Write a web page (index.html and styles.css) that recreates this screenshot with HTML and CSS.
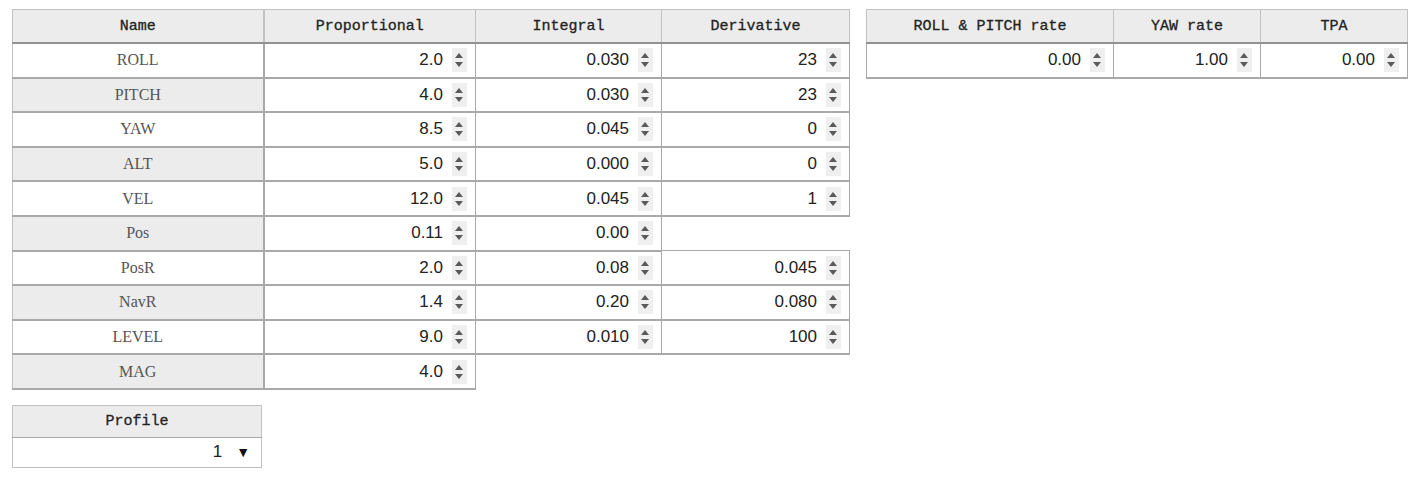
FILE: index.html
```html
<!DOCTYPE html>
<html lang="en">
  <head>
    <meta charset="UTF-8" />
    <meta name="viewport" content="width=device-width, initial-scale=1.0" />
    <title>PID Tuning</title>
    <link rel="stylesheet" href="styles.css">
  </head>
  <body>
    <div class="tab-pid">
      <div class="pid-column">
        <table class="pid-table">
          <colgroup>
            <col style="width: 251px">
            <col style="width: 212px">
            <col style="width: 186px">
            <col style="width: 188px">
          </colgroup>
          <thead>
            <tr>
              <th>Name</th>
              <th>Proportional</th>
              <th>Integral</th>
              <th>Derivative</th>
            </tr>
          </thead>
          <tbody>
            <tr>
              <td class="name">ROLL</td>
              <td><div class="num-field"><input type="text" value="2.0"><span class="spin"></span></div></td>
              <td><div class="num-field"><input type="text" value="0.030"><span class="spin"></span></div></td>
              <td><div class="num-field"><input type="text" value="23"><span class="spin"></span></div></td>
            </tr>
            <tr>
              <td class="name">PITCH</td>
              <td><div class="num-field"><input type="text" value="4.0"><span class="spin"></span></div></td>
              <td><div class="num-field"><input type="text" value="0.030"><span class="spin"></span></div></td>
              <td><div class="num-field"><input type="text" value="23"><span class="spin"></span></div></td>
            </tr>
            <tr>
              <td class="name">YAW</td>
              <td><div class="num-field"><input type="text" value="8.5"><span class="spin"></span></div></td>
              <td><div class="num-field"><input type="text" value="0.045"><span class="spin"></span></div></td>
              <td><div class="num-field"><input type="text" value="0"><span class="spin"></span></div></td>
            </tr>
            <tr>
              <td class="name">ALT</td>
              <td><div class="num-field"><input type="text" value="5.0"><span class="spin"></span></div></td>
              <td><div class="num-field"><input type="text" value="0.000"><span class="spin"></span></div></td>
              <td><div class="num-field"><input type="text" value="0"><span class="spin"></span></div></td>
            </tr>
            <tr>
              <td class="name">VEL</td>
              <td><div class="num-field"><input type="text" value="12.0"><span class="spin"></span></div></td>
              <td><div class="num-field"><input type="text" value="0.045"><span class="spin"></span></div></td>
              <td><div class="num-field"><input type="text" value="1"><span class="spin"></span></div></td>
            </tr>
            <tr>
              <td class="name">Pos</td>
              <td><div class="num-field"><input type="text" value="0.11"><span class="spin"></span></div></td>
              <td><div class="num-field"><input type="text" value="0.00"><span class="spin"></span></div></td>
            </tr>
            <tr>
              <td class="name">PosR</td>
              <td><div class="num-field"><input type="text" value="2.0"><span class="spin"></span></div></td>
              <td><div class="num-field"><input type="text" value="0.08"><span class="spin"></span></div></td>
              <td><div class="num-field"><input type="text" value="0.045"><span class="spin"></span></div></td>
            </tr>
            <tr>
              <td class="name">NavR</td>
              <td><div class="num-field"><input type="text" value="1.4"><span class="spin"></span></div></td>
              <td><div class="num-field"><input type="text" value="0.20"><span class="spin"></span></div></td>
              <td><div class="num-field"><input type="text" value="0.080"><span class="spin"></span></div></td>
            </tr>
            <tr>
              <td class="name">LEVEL</td>
              <td><div class="num-field"><input type="text" value="9.0"><span class="spin"></span></div></td>
              <td><div class="num-field"><input type="text" value="0.010"><span class="spin"></span></div></td>
              <td><div class="num-field"><input type="text" value="100"><span class="spin"></span></div></td>
            </tr>
            <tr>
              <td class="name">MAG</td>
              <td><div class="num-field"><input type="text" value="4.0"><span class="spin"></span></div></td>
            </tr>
          </tbody>
        </table>

        <table class="profile-table">
          <thead>
            <tr><th>Profile</th></tr>
          </thead>
          <tbody>
            <tr>
              <td>
                <div class="profile-select">
                  <span>1</span>
                  <span class="arrow">&#9660;</span>
                </div>
              </td>
            </tr>
          </tbody>
        </table>
      </div>

      <table class="rate-table">
        <colgroup>
          <col style="width: 247px">
          <col style="width: 147px">
          <col style="width: 147px">
        </colgroup>
        <thead>
          <tr>
            <th>ROLL &amp; PITCH rate</th>
            <th>YAW rate</th>
            <th>TPA</th>
          </tr>
        </thead>
        <tbody>
          <tr>
            <td><div class="num-field"><input type="text" value="0.00"><span class="spin"></span></div></td>
            <td><div class="num-field"><input type="text" value="1.00"><span class="spin"></span></div></td>
            <td><div class="num-field"><input type="text" value="0.00"><span class="spin"></span></div></td>
          </tr>
        </tbody>
      </table>
    </div>
  </body>
</html>
```

FILE: styles.css
```css
body {
  margin: 0;
  background-color: #fff;
  font-family: "Liberation Mono", monospace;
  color: #333;
}
.tab-pid {
  display: flex;
  align-items: flex-start;
  gap: 16px;
  padding: 9px 0 0 12px;
}
.pid-column {
  display: flex;
  flex-direction: column;
  gap: 15px;
}
table {
  border-collapse: collapse;
  table-layout: fixed;
}
.pid-table {
  width: 837px;
}
.rate-table {
  width: 541px;
}
.profile-table {
  width: 250px;
}
th {
  height: 32px;
  padding: 0;
  background-color: #ececec;
  border: 1px solid #c2c2c2;
  border-bottom: 2px solid #929292;
  font-family: "Liberation Mono", monospace;
  font-size: 15px;
  font-weight: normal;
  color: #222;
  -webkit-text-stroke: 0.3px #222;
}
td {
  height: 32.6px;
  padding: 0 3px;
  border: 1px solid #a9a9a9;
  border-bottom-width: 2px;
  background-color: #fff;
}
td.name {
  text-align: center;
  font-family: "Liberation Serif", serif;
  font-size: 16px;
  color: #555;
}
.pid-table tbody tr:nth-child(even) td.name {
  background-color: #ececec;
}
.pid-table td:first-child,
.pid-table th:first-child {
  border-left-color: #c2c2c2;
  border-right-width: 2px;
}
.num-field {
  display: flex;
  align-items: center;
  height: 28px;
  padding-right: 5px;
  background-color: #fff;
}
.num-field input {
  flex: 1;
  min-width: 0;
  height: 100%;
  box-sizing: border-box;
  margin: 0;
  padding: 0 9px 0 0;
  border: none;
  outline: none;
  background: transparent;
  text-align: right;
  font-family: "Liberation Sans", Arial, sans-serif;
  font-size: 17px;
  color: #222;
}
.spin {
  position: relative;
  width: 15px;
  height: 24px;
  background-color: #efefef;
}
.spin::before,
.spin::after {
  content: '';
  position: absolute;
  left: 3px;
  border-left: 4.5px solid transparent;
  border-right: 4.5px solid transparent;
}
.spin::before {
  top: 5px;
  border-bottom: 5px solid #5a5a5a;
}
.spin::after {
  bottom: 5px;
  border-top: 5px solid #5a5a5a;
}
.profile-table th {
  height: 31px;
  border-bottom: 1px solid #a9a9a9;
}
.profile-table td {
  height: 29px;
  border: 1px solid #c2c2c2;
}
.profile-select {
  display: flex;
  justify-content: flex-end;
  align-items: center;
  gap: 14px;
  padding-right: 8px;
  font-family: "Liberation Sans", Arial, sans-serif;
  font-size: 17px;
  color: #222;
}
.profile-select .arrow {
  font-size: 14px;
  color: #111;
}
```
